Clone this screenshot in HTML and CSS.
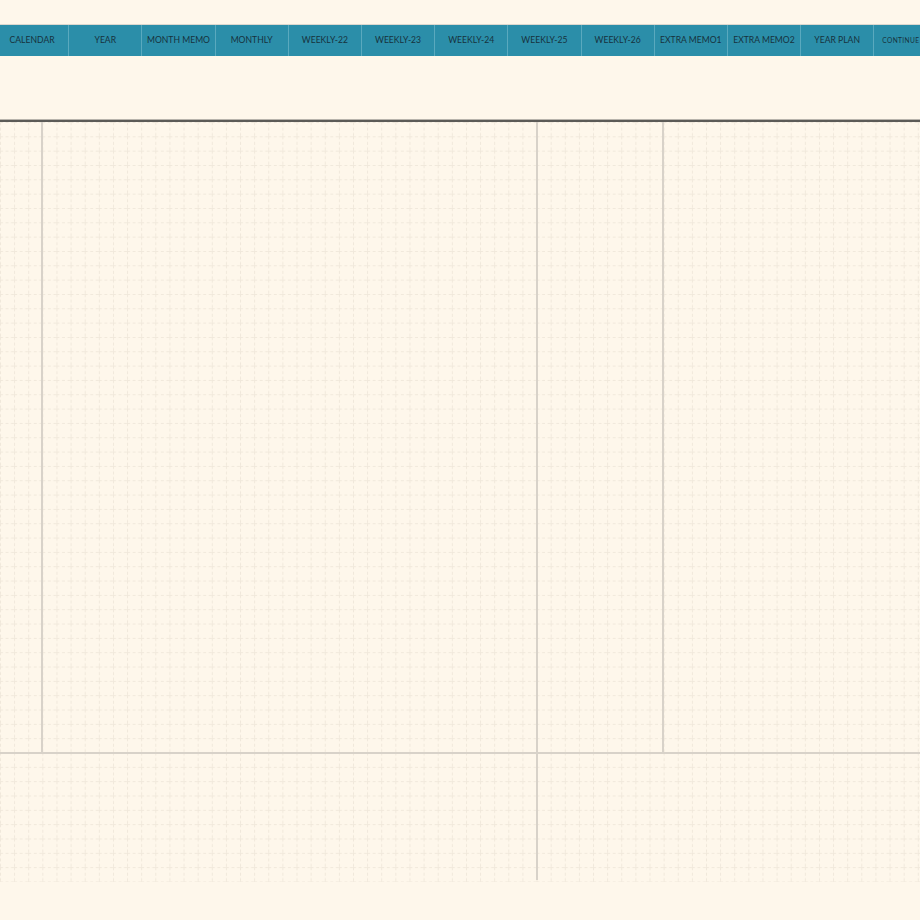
FILE: index.html
```html
<!DOCTYPE html>
<html lang="en">
<head>
  <meta charset="UTF-8">
  <meta name="viewport" content="width=device-width, initial-scale=1.0">
  <title>Planner - Weekly</title>
  <link rel="stylesheet" href="styles.css">
</head>
<body>
  <!-- Tab bar -->
  <nav class="tabs">
    <a class="tab">CALENDAR</a>
    <a class="tab">YEAR</a>
    <a class="tab">MONTH MEMO</a>
    <a class="tab">MONTHLY</a>
    <a class="tab">WEEKLY-22</a>
    <a class="tab">WEEKLY-23</a>
    <a class="tab">WEEKLY-24</a>
    <a class="tab">WEEKLY-25</a>
    <a class="tab">WEEKLY-26</a>
    <a class="tab">EXTRA MEMO1</a>
    <a class="tab">EXTRA MEMO2</a>
    <a class="tab">YEAR PLAN</a>
    <a class="tab tab-small">CONTINUE</a>
  </nav>

  <div class="page-head"></div>

  <!-- Grid paper sheet -->
  <div class="sheet">
    <svg class="paper" width="100%" height="100%">
      <defs>
        <pattern id="dots" width="14.12" height="14.33" patternUnits="userSpaceOnUse">
          <path d="M0.5 0 V14.33" class="dash" />
          <path d="M0 0.5 H14.12" class="dash" />
        </pattern>
      </defs>
      <rect width="100%" height="100%" fill="url(#dots)" />
    </svg>

    <div class="upper">
      <div class="panel side"></div>
      <div class="panel main"></div>
      <div class="panel mid"></div>
      <div class="panel rest"></div>
    </div>
    <div class="lower">
      <div class="panel notes"></div>
      <div class="panel rest"></div>
    </div>
  </div>
</body>
</html>
```

FILE: styles.css
```css
body {
  margin: 0;
  background-color: #FEF7EB;
  font-family: "Lato", "Liberation Sans", sans-serif;
  overflow: hidden;
}
.tabs {
  display: flex;
  margin: 24px 0 0 -4px;
  height: 31px;
  background-color: #2B8EA9;
  border-top: 1px solid #DCD8CF;
  overflow: hidden;
}
.tab {
  flex: 0 0 73.2px;
  box-sizing: border-box;
  border-right: 1px solid #5AA9BE;
  color: #17323D;
  font-size: 8.6px;
  line-height: 31px;
  text-align: center;
  white-space: nowrap;
  overflow: hidden;
}
.tab-small {
  font-size: 6.6px;
  letter-spacing: 0.4px;
  text-align: left;
  padding-left: 8px;
}
.page-head {
  height: 64px;
}
.sheet {
  position: relative;
  height: 760px;
  border-top: 2px solid #5C5B57;
  box-shadow: 0 -1px 0 #B8B4AC;
}
.paper {
  position: absolute;
  top: 0;
  left: 0;
}
.dash {
  stroke: #F0E8DB;
  stroke-width: 1;
  stroke-dasharray: 3 2.5;
  fill: none;
}
.upper {
  position: relative;
  display: flex;
  height: 630px;
  border-bottom: 2px solid #D8D2C9;
}
.lower {
  position: relative;
  display: flex;
  height: 126px;
}
.panel {
  box-sizing: border-box;
  border-right: 2px solid #D8D2C9;
}
.side {
  width: 43px;
}
.main {
  width: 495px;
}
.mid {
  width: 126px;
}
.notes {
  width: 538px;
}
.rest {
  flex: 1;
  border-right: none;
}
```
